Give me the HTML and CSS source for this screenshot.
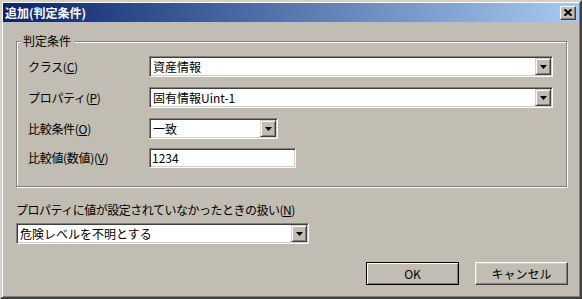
FILE: index.html
```html
<!DOCTYPE html>
<html lang="ja">
<head>
    <meta charset="UTF-8">
    <title>追加(判定条件)</title>
    <link rel="stylesheet" href="styles.css">
</head>
<body>
    <div class="window">
        <div class="titlebar">
            <span class="title">追加(判定条件)</span>
            <button class="close">
                <svg width="8" height="7" viewBox="0 0 8 7"><path d="M0.5 0.3 L7.5 6.7 M7.5 0.3 L0.5 6.7" stroke="#000" stroke-width="2" fill="none"/></svg>
            </button>
        </div>
        <div class="content">
            <div class="group">
                <span class="group-label">判定条件</span>
                <div class="row">
                    <span class="field-label">クラス(<u>C</u>)</span>
                    <div class="combo combo-wide">
                        <span class="combo-text">資産情報</span>
                        <span class="drop"><svg width="7" height="4" viewBox="0 0 7 4"><path d="M0 0h7L3.5 4z" fill="#000"/></svg></span>
                    </div>
                </div>
                <div class="row">
                    <span class="field-label">プロパティ(<u>P</u>)</span>
                    <div class="combo combo-wide">
                        <span class="combo-text">固有情報Uint-1</span>
                        <span class="drop"><svg width="7" height="4" viewBox="0 0 7 4"><path d="M0 0h7L3.5 4z" fill="#000"/></svg></span>
                    </div>
                </div>
                <div class="row row-tight">
                    <span class="field-label">比較条件(<u>O</u>)</span>
                    <div class="combo combo-small">
                        <span class="combo-text">一致</span>
                        <span class="drop"><svg width="7" height="4" viewBox="0 0 7 4"><path d="M0 0h7L3.5 4z" fill="#000"/></svg></span>
                    </div>
                </div>
                <div class="row row-last">
                    <span class="field-label">比較値(数値)(<u>V</u>)</span>
                    <div class="edit">1234</div>
                </div>
            </div>
            <div class="note">プロパティに値が設定されていなかったときの扱い(<u>N</u>)</div>
            <div class="combo combo-mid">
                <span class="combo-text">危険レベルを不明とする</span>
                <span class="drop"><svg width="7" height="4" viewBox="0 0 7 4"><path d="M0 0h7L3.5 4z" fill="#000"/></svg></span>
            </div>
            <div class="buttons">
                <button class="btn btn-default">OK</button>
                <button class="btn">キャンセル</button>
            </div>
        </div>
    </div>
</body>
</html>
```
FILE: styles.css
```css
body {
    margin: 0;
    padding: 0;
    font-family: "Noto Sans CJK JP", sans-serif;
    font-size: 12px;
    line-height: 14px;
    color: #000;
    background: #c1bdb2;
}

.window {
    box-sizing: border-box;
    width: 582px;
    height: 299px;
    padding: 1px;
    background: #c1bdb2;
    border: 2px solid;
    border-color: #d4d0c8 #404040 #404040 #d4d0c8;
    box-shadow: inset 1px 1px 0 #fff, inset -1px -1px 0 #808080;
}

.titlebar {
    height: 19px;
    display: flex;
    align-items: center;
    justify-content: space-between;
    padding: 0 3px 0 2px;
    background: linear-gradient(to right, #0a246a, #a6caf0);
}

.title {
    color: #fff;
    font-weight: bold;
}

.close {
    box-sizing: border-box;
    width: 16px;
    height: 14px;
    padding: 0;
    display: flex;
    align-items: center;
    justify-content: center;
    background: #c1bdb2;
    border: 1px solid;
    border-color: #fff #404040 #404040 #fff;
    box-shadow: inset -1px -1px 0 #808080;
}

.content {
    padding: 19px 11px 0 13px;
}

.group {
    position: relative;
    box-sizing: border-box;
    width: 551px;
    padding: 14px 11px 18px;
    border: 1px solid #808080;
    box-shadow: 1px 1px 0 #fff, inset 1px 1px 0 #fff;
}

.group-label {
    position: absolute;
    top: -8px;
    left: 4px;
    padding: 0 3px 0 2px;
    background: #c1bdb2;
}

.row {
    display: flex;
    align-items: center;
    height: 21px;
    margin-bottom: 10px;
}

.row-tight {
    margin-bottom: 9px;
}

.row-last {
    height: 20px;
    margin-bottom: 0;
}

.field-label {
    width: 121px;
    flex-shrink: 0;
    letter-spacing: -0.3px;
}

.combo,
.edit {
    box-sizing: border-box;
    display: flex;
    align-items: center;
    height: 21px;
    background: #fff;
    border: 1px solid;
    border-color: #808080 #fff #fff #808080;
    box-shadow: inset 1px 1px 0 #404040, inset -1px -1px 0 #d4d0c8;
    padding: 1px;
}

.combo-wide {
    width: 404px;
}

.combo-small {
    width: 129px;
}

.combo-mid {
    width: 293px;
}

.edit {
    width: 147px;
    height: 20px;
    padding-left: 2px;
}

.combo-text {
    flex: 1;
    padding-left: 2px;
}

.drop {
    box-sizing: border-box;
    width: 16px;
    height: 17px;
    display: flex;
    align-items: center;
    justify-content: center;
    background: #c1bdb2;
    border: 1px solid;
    border-color: #d4d0c8 #404040 #404040 #d4d0c8;
    box-shadow: inset 1px 1px 0 #fff, inset -1px -1px 0 #808080;
}

.note {
    margin-top: 16px;
    margin-bottom: 6px;
    letter-spacing: -0.5px;
}

.buttons {
    display: flex;
    justify-content: flex-end;
    gap: 16px;
    margin-top: 18px;
}

.btn {
    box-sizing: border-box;
    width: 93px;
    height: 23px;
    padding: 0;
    font-family: inherit;
    font-size: 12px;
    color: #000;
    background: #c1bdb2;
    border: 1px solid;
    border-color: #fff #404040 #404040 #fff;
    box-shadow: inset -1px -1px 0 #808080, inset 1px 1px 0 #d4d0c8;
}

.btn-default {
    border-color: #000;
    box-shadow: inset 1px 1px 0 #fff, inset -1px -1px 0 #808080;
}
```
